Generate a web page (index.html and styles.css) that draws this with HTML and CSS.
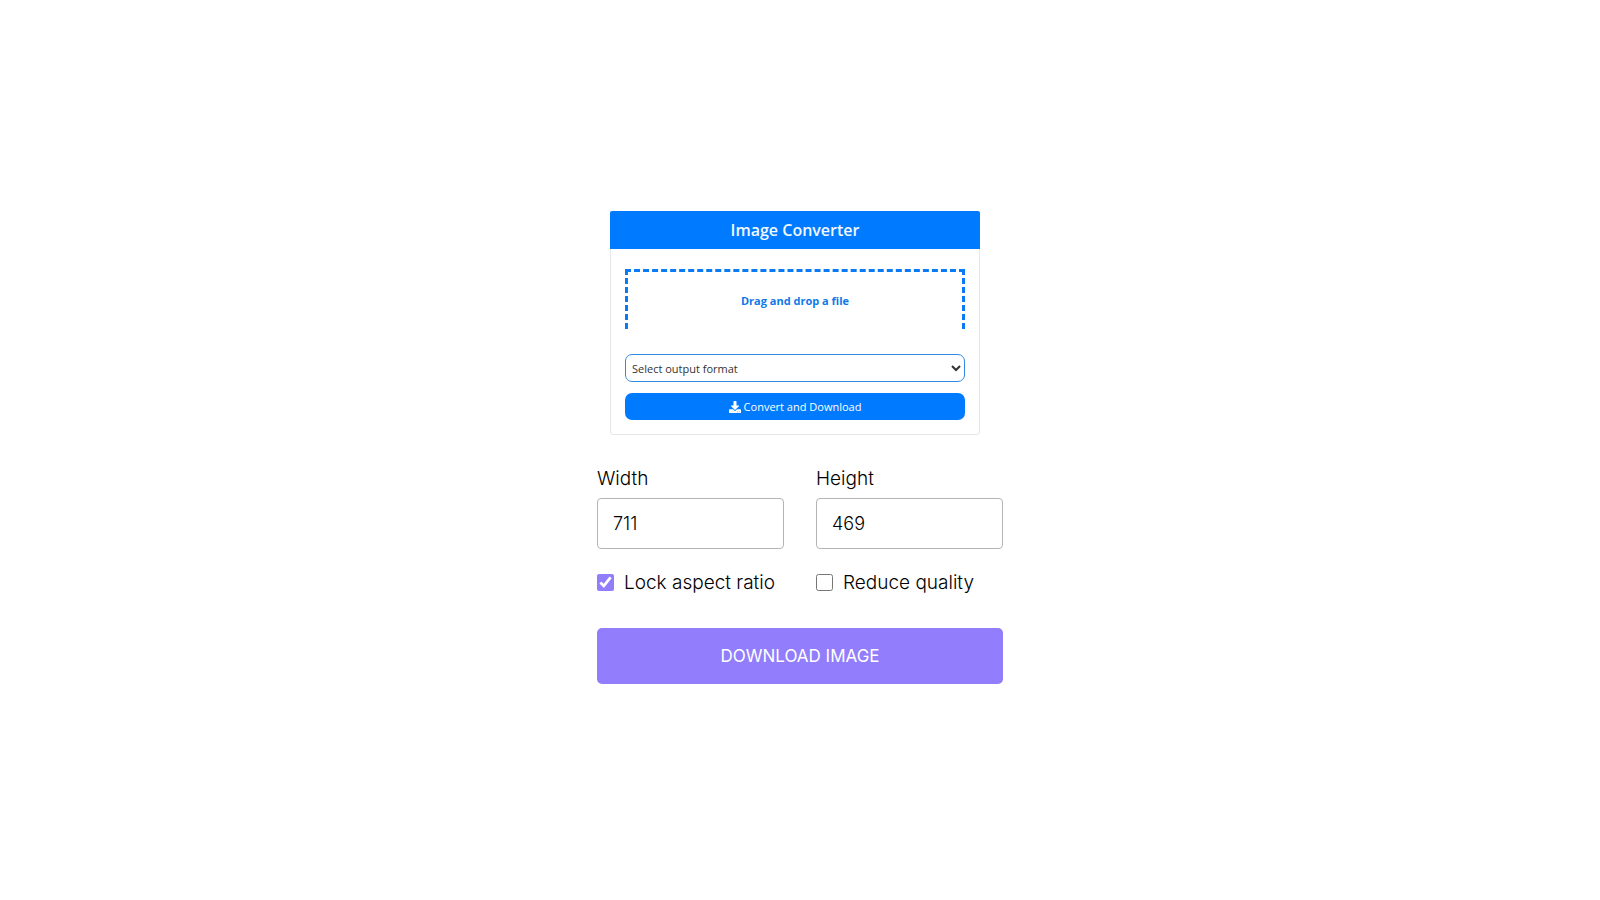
FILE: index.html
```html
<!DOCTYPE html>
<html lang="en">
<head>
  <meta charset="UTF-8">
  <meta name="viewport" content="width=device-width, initial-scale=1.0">
  <title>Image Resizer</title>
  <link rel="stylesheet" href="styles.css">
</head>

<body>

  <main class="wrapper">
    <!-- Image preview -->
    <section class="preview">
      <h2 class="preview-title">Image Converter</h2>
      <div class="preview-body">
        <div class="drop-zone">Drag and drop a file</div>
        <select class="format-select" aria-label="Output format">
          <option>Select output format</option>
        </select>
        <button class="convert-btn" type="button">
          <svg class="convert-icon" viewBox="0 0 512 512" aria-hidden="true">
            <path d="M216 0h80c13 0 24 11 24 24v168h88c18 0 27 21 14 34L270 378c-7 7-20 7-27 0L90 226c-13-13-4-34 14-34h88V24c0-13 11-24 24-24zm296 376v112c0 13-11 24-24 24H24c-13 0-24-11-24-24V376c0-13 11-24 24-24h147l49 49c20 20 52 20 72 0l49-49h147c13 0 24 11 24 24zm-124 88c0-11-9-20-20-20s-20 9-20 20 9 20 20 20 20-9 20-20zm64 0c0-11-9-20-20-20s-20 9-20 20 9 20 20 20 20-9 20-20z"/>
          </svg>
          Convert and Download
        </button>
      </div>
    </section>

    <!-- Resize options -->
    <form class="content">
      <div class="row sizes">
        <div class="column">
          <label for="width">Width</label>
          <input type="number" id="width" value="711">
        </div>
        <div class="column">
          <label for="height">Height</label>
          <input type="number" id="height" value="469">
        </div>
      </div>
      <div class="row checkboxes">
        <div class="column">
          <input type="checkbox" id="ratio" checked>
          <label for="ratio">Lock aspect ratio</label>
        </div>
        <div class="column">
          <input type="checkbox" id="quality">
          <label for="quality">Reduce quality</label>
        </div>
      </div>
      <button class="download-btn" type="button">Download Image</button>
    </form>
  </main>

</body>
</html>
```
FILE: styles.css
```css
* {
  margin: 0;
  padding: 0;
  box-sizing: border-box;
  font-family: 'Inter', sans-serif;
}

body {
  display: flex;
  align-items: center;
  justify-content: center;
  min-height: 100vh;
  background: #fff;
}

.wrapper {
  width: 100%;
  max-width: 450px;
  padding: 0 22px 5px;
}

/* Preview card */
.preview {
  margin: 0 23px 0 13px;
  border: 1px solid #e4e6e8;
  border-radius: 3px;
}

.preview * {
  font-family: 'Open Sans', sans-serif;
}

.preview-title {
  margin: -1px -1px 0;
  background: #007bff;
  color: #f2f8ff;
  border-radius: 2px 2px 0 0;
  font-size: 16px;
  font-weight: 600;
  line-height: 38px;
  text-align: center;
}

.preview-body {
  display: flex;
  flex-direction: column;
  padding: 20px 14px 14px;
}

.drop-zone {
  height: 60px;
  margin-bottom: 25px;
  border: 3px dashed #0a7bf5;
  border-bottom: none;
  color: #0f78e8;
  font-size: 11px;
  font-weight: 700;
  line-height: 58px;
  text-align: center;
}

.format-select {
  height: 28px;
  margin-bottom: 11px;
  padding: 0 2px;
  border: 1px solid #2f8be0;
  border-radius: 7px;
  background: #fff;
  color: #333;
  font-size: 11px;
}

.convert-btn {
  display: flex;
  align-items: center;
  justify-content: center;
  gap: 3px;
  height: 27px;
  border: none;
  border-radius: 7px;
  background: #007bff;
  color: #fff;
  font-size: 11px;
}

.convert-icon {
  width: 12px;
  height: 12px;
  fill: #fff;
}

/* Resize form */
.row {
  display: flex;
  gap: 32px;
}

.row .column {
  flex: 1;
}

.content label {
  color: #000;
  font-size: 19px;
  font-weight: 300;
}

.sizes {
  margin-top: 30px;
}

.sizes label {
  display: block;
  line-height: 27px;
}

.sizes input {
  width: 100%;
  height: 51px;
  margin-top: 6px;
  padding: 0 15px;
  border: 1px solid #b4b4b4;
  border-radius: 4px;
  outline: none;
  color: #000;
  font-size: 18px;
  font-weight: 300;
}

.checkboxes {
  margin-top: 20px;
}

.checkboxes .column {
  display: flex;
  align-items: center;
  gap: 10px;
  height: 27px;
}

.checkboxes input {
  width: 17px;
  height: 17px;
  accent-color: #927dfc;
}

.download-btn {
  width: 100%;
  height: 56px;
  margin-top: 32px;
  border: none;
  border-radius: 5px;
  background: #927dfc;
  color: #fff;
  font-size: 17px;
  text-transform: uppercase;
  cursor: pointer;
}
```
